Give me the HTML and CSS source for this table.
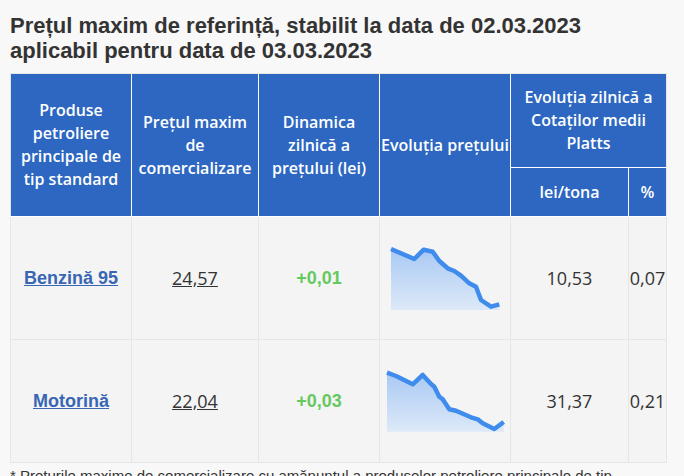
FILE: index.html
```html
<!DOCTYPE html>
<html lang="ro">
<head>
<meta charset="utf-8">
<title>Prețul maxim de referință</title>
<link rel="stylesheet" href="styles.css">
</head>
<body>
<h2 class="title">Prețul maxim de referință, stabilit la data de 02.03.2023<br>aplicabil pentru data de 03.03.2023</h2>
<table class="prices">
  <colgroup>
    <col class="c1"><col class="c2"><col class="c3"><col class="c4"><col class="c5"><col class="c6">
  </colgroup>
  <thead>
    <tr>
      <th rowspan="2">Produse petroliere principale de tip standard</th>
      <th rowspan="2">Prețul maxim de comercializare</th>
      <th rowspan="2">Dinamica zilnică a prețului (lei)</th>
      <th rowspan="2" class="nowrap">Evoluția prețului</th>
      <th colspan="2" class="top">Evoluția zilnică a Cotaților medii Platts</th>
    </tr>
    <tr>
      <th class="sub">lei/tona</th>
      <th class="sub">%</th>
    </tr>
  </thead>
  <tbody>
    <tr>
      <td><a class="product" href="#">Benzină 95</a></td>
      <td><span class="price">24,57</span></td>
      <td class="delta">+0,01</td>
      <td class="chart">
        <svg class="spark" width="113" height="66" viewBox="0 0 113 66">
          <defs>
            <linearGradient id="g1" x1="0" y1="0" x2="0" y2="1">
              <stop offset="0" stop-color="#a9c9f3"/>
              <stop offset="1" stop-color="#dde9f8"/>
            </linearGradient>
          </defs>
          <path d="M2 4 L25.3 14 L34.7 4.7 L43.7 6.7 L50.3 16 L58.7 23.3 L65.3 26 L72 30.7 L80.3 38.3 L87 41.7 L92 55 L102 61.7 L110.3 59.3 L110.3 65 L2 65 Z" fill="url(#g1)"/>
          <path d="M2 4 L25.3 14 L34.7 4.7 L43.7 6.7 L50.3 16 L58.7 23.3 L65.3 26 L72 30.7 L80.3 38.3 L87 41.7 L92 55 L102 61.7 L110.3 59.3" fill="none" stroke="#3f8cec" stroke-width="4.5" stroke-linejoin="round" stroke-linecap="butt"/>
        </svg>
      </td>
      <td class="num">10,53</td>
      <td class="num pct">0,07</td>
    </tr>
    <tr>
      <td><a class="product" href="#">Motorină</a></td>
      <td><span class="price">22,04</span></td>
      <td class="delta">+0,03</td>
      <td class="chart">
        <svg class="spark" width="121" height="64" viewBox="0 0 121 64">
          <defs>
            <linearGradient id="g2" x1="0" y1="0" x2="0" y2="1">
              <stop offset="0" stop-color="#a9c9f3"/>
              <stop offset="1" stop-color="#dde9f8"/>
            </linearGradient>
          </defs>
          <path d="M2 3.7 L11 7 L27.7 15.3 L37.7 6 L46 15 L49.3 17.7 L54.3 27.7 L57.7 30.3 L64.3 40.3 L71 41.7 L86 48.3 L92.7 50.3 L97.7 54.3 L109.3 60 L118.7 53 L118.7 62.7 L2 62.7 Z" fill="url(#g2)"/>
          <path d="M2 3.7 L11 7 L27.7 15.3 L37.7 6 L46 15 L49.3 17.7 L54.3 27.7 L57.7 30.3 L64.3 40.3 L71 41.7 L86 48.3 L92.7 50.3 L97.7 54.3 L109.3 60 L118.7 53" fill="none" stroke="#3f8cec" stroke-width="4.5" stroke-linejoin="round" stroke-linecap="butt"/>
        </svg>
      </td>
      <td class="num">31,37</td>
      <td class="num pct">0,21</td>
    </tr>
  </tbody>
</table>
<p class="note">* Prețurile maxime de comercializare cu amănuntul a produselor petroliere principale de tip standard</p>
</body>
</html>
```
FILE: styles.css
```css
html, body {
  margin: 0;
  padding: 0;
  background: #f8f8f8;
}
body {
  padding: 0 10px;
  color: #333;
  font-family: "Liberation Sans", Arial, sans-serif;
}
.title {
  margin: 0;
  padding-top: 13px;
  font-size: 22px;
  line-height: 25px;
  font-weight: bold;
  color: #333;
}
.prices {
  margin-top: 10px;
  border-collapse: collapse;
  table-layout: fixed;
  width: 656px;
}
.c1 { width: 121px; }
.c2 { width: 127px; }
.c3 { width: 121px; }
.c4 { width: 131px; }
.c5 { width: 118px; }
.c6 { width: 38px; }
.prices th {
  background: #2d67c1;
  color: #fff;
  font-family: "Open Sans", sans-serif;
  font-weight: 600;
  font-size: 16px;
  line-height: 23px;
  border: 1px solid #fff;
  padding: 0 2px;
  text-align: center;
  vertical-align: middle;
}
.prices thead tr:first-child th { border-top-color: #e6e6e6; }
.prices th:first-child { border-left-color: #e6e6e6; }
.prices thead tr:first-child th:last-child,
.prices thead tr:last-child th:last-child { border-right-color: #e6e6e6; }
.prices th.nowrap { white-space: nowrap; padding: 0; }
.prices th.top { height: 93px; }
.prices th.sub { height: 48px; }
.prices td {
  background: #f4f4f4;
  border: 1px solid #e6e6e6;
  height: 122px;
  padding: 0;
  text-align: center;
  vertical-align: middle;
  font-size: 18px;
}
.product {
  font-family: "Liberation Sans", Arial, sans-serif;
  font-weight: bold;
  color: #3866b5;
  text-decoration: underline;
}
.price {
  font-family: "Open Sans", sans-serif;
  color: #333;
  text-decoration: underline;
}
.delta {
  font-weight: bold;
  color: #64c95e;
}
.chart .spark { display: block; margin: 0 auto; }
.num {
  font-family: "Open Sans", sans-serif;
  color: #333;
}
.pct { white-space: nowrap; }
.note {
  margin: 4px 0 0;
  font-size: 15px;
  line-height: 18px;
  color: #333;
}
```
